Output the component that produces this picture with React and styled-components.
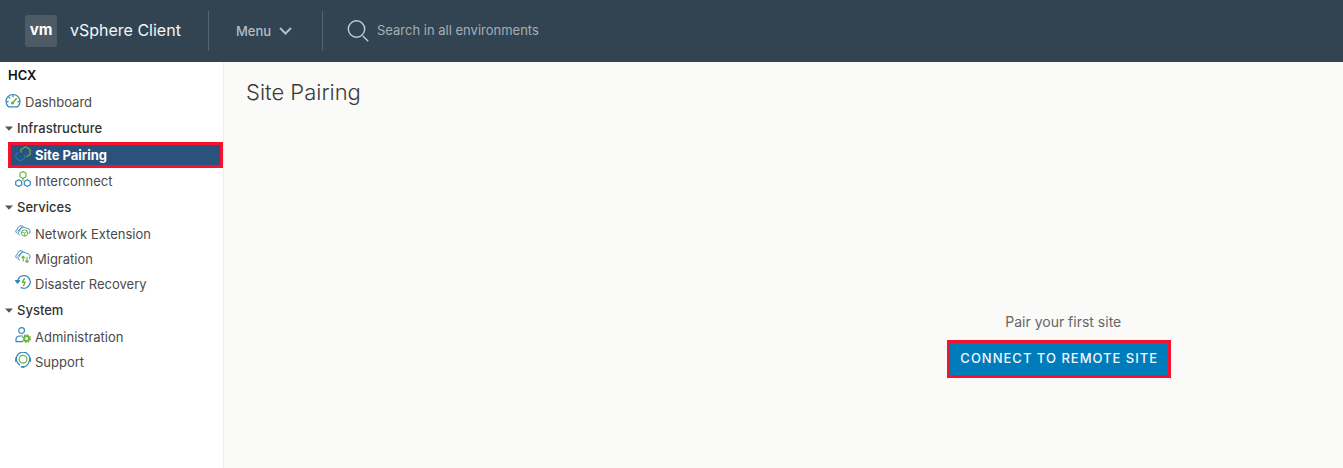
import React from "react";
import styled, { createGlobalStyle, css } from "styled-components";

const GlobalStyle = createGlobalStyle`
  *, *::before, *::after { box-sizing: border-box; }
  body {
    margin: 0;
    background: #fafaf8;
    color: #444;
    font-family: Inter, "Open Sans", "Liberation Sans", sans-serif;
    font-size: 13px;
  }
  button, input { font: inherit; }
`;

const BLUE = "#2d86bd";
const GREEN = "#6db33f";

const Page = styled.div`
  display: flex;
  flex-direction: column;
  min-height: 100vh;
`;

const Header = styled.header`
  display: flex;
  align-items: center;
  height: 62px;
  padding: 0 25px;
  background: #324452;
`;

const Logo = styled.span`
  display: grid;
  place-items: center;
  width: 32px;
  height: 32px;
  margin-right: 13px;
  border-radius: 3px;
  background: #4d5b67;
  color: #fff;
  font-size: 15px;
  font-weight: 700;
  line-height: 28px;
  padding-bottom: 2px;
`;

const Brand = styled.a`
  display: flex;
  align-items: center;
  width: 184px;
  height: 40px;
  border-right: 1px solid #56646f;
  color: #f4f6f7;
  font-size: 16px;
  text-decoration: none;
  white-space: nowrap;
`;

const BrandName = styled.span`
  padding-bottom: 2px;
`;

const MenuButton = styled.button`
  display: flex;
  align-items: center;
  gap: 8px;
  width: 114px;
  height: 40px;
  padding: 0 0 0 27px;
  border: 0;
  border-right: 1px solid #56646f;
  background: none;
  color: #b4bcc2;
  font-weight: 500;
`;

const Search = styled.label`
  display: flex;
  align-items: center;
  flex: 1;
  gap: 8px;
  padding-left: 24px;
`;

const SearchInput = styled.input`
  flex: 1;
  min-width: 0;
  padding: 0 0 2px;
  border: 0;
  outline: 0;
  background: none;
  color: #fff;
  &::placeholder { color: #a5afb7; opacity: 1; }
`;

const Body = styled.div`
  display: flex;
  flex: 1;
`;

const Sidebar = styled.nav`
  flex: 0 0 224px;
  border-right: 1px solid #eeefef;
  background: #fff;
`;

const Product = styled.h2`
  margin: 0;
  padding-left: 8px;
  color: #111;
  font-size: 13px;
  font-weight: 600;
  line-height: 26px;
`;

const List = styled.ul`
  margin: 0;
  padding: 0;
  list-style: none;
`;

const GroupTitle = styled.button`
  display: flex;
  align-items: center;
  gap: 4px;
  width: 100%;
  height: 28px;
  padding: 0 0 0 5px;
  border: 0;
  background: none;
  color: #333;
  font-weight: 500;
`;

const NavLink = styled.a`
  display: flex;
  align-items: center;
  gap: 4px;
  height: ${(p) => (p.$top ? "26px" : "25px")};
  padding-left: ${(p) => (p.$top ? "5px" : "15px")};
  padding-top: ${(p) => (p.$top ? "2px" : "0")};
  color: #4a4a4a;
  text-decoration: none;
  white-space: nowrap;
  ${(p) =>
    p.$selected &&
    css`
      height: 26px;
      margin-left: 8px;
      padding-left: 4px;
      border: 3px solid #f5122f;
      background: #29527d;
      color: #fff;
      font-weight: 700;
    `}
`;

const ItemIcon = styled.svg`
  flex: none;
  width: 16px;
  height: 16px;
  margin-bottom: 3px;
`;

const Main = styled.main`
  flex: 1;
  min-width: 0;
  padding-top: 14px;
`;

const Title = styled.h1`
  margin: 0;
  padding-left: 22px;
  color: #3a3a3a;
  font-size: 22px;
  font-weight: 300;
  line-height: 32px;
`;

const Columns = styled.div`
  display: grid;
  grid-template-columns: 1fr 1fr;
  padding-top: 204px;
`;

const EmptyState = styled.section`
  display: flex;
  flex-direction: column;
  align-items: center;
  grid-column: 2;
`;

const Hint = styled.p`
  margin: 0 0 8px;
  color: #666;
  font-size: 14px;
  line-height: 20px;
`;

const ConnectButton = styled.button`
  height: 38px;
  width: 224px;
  margin-right: 8px;
  padding: 0 0 2px;
  border: 3px solid #f5122f;
  background: #007cbb;
  color: #f2f9fd;
  font-size: 13px;
  font-weight: 500;
  letter-spacing: 1px;
  text-transform: uppercase;
  white-space: nowrap;
`;

const glyphs = {
  dashboard: (
    <>
      <path d="M3.4 13.8A7 7 0 1 1 12.6 13.8Z" />
      <path d="M8 2.2v1.6M3.8 4.2l.9.9M1.800 8.600h1.400M12.800 8.600h1.400" />
      <path d="M7.400 10.200 11.400 5.600" stroke={GREEN} strokeWidth="1.600" />
      <circle cx="7.400" cy="10" r="1" fill={GREEN} stroke={GREEN} />
    </>
  ),
  pairing: (
    <>
      <path d="M3 6.600 1 8v4L5.400 15 9.800 12.200V9" stroke="#1c78c0" />
      <path d="M6 6.200V3.400L10.600.8 15 3.400v5L11.800 10.400" stroke={GREEN} />
    </>
  ),
  interconnect: (
    <>
      <path d="M8 .6l3 1.700v3.500L8 7.500 5 5.800V2.300Z" stroke={GREEN} />
      <path d="M8 7.500v2" stroke={GREEN} />
      <path d="M3.700 8.700l3 1.700v3.300l-3 1.700-3-1.700v-3.300ZM12.300 8.700l3 1.700v3.300l-3 1.700-3-1.700v-3.300Z" />
    </>
  ),
  network: (
    <>
      <path d="M2 9.200C.2 8.200.4 6 2.400 5.400 2.600 2.600 5.200 1 7.800 2.200" strokeWidth="1" />
      <path d="M4.600 11C2.600 10.200 2.800 7.800 4.800 7 5 3.600 8.800 2 11.200 4.200 14.200 4 16 7 14.600 9.400" strokeWidth="1" />
      <path d="M2.800 7.200 6.600 3.400" strokeWidth=".8" />
      <circle cx="9.600" cy="9" r="3.200" stroke={GREEN} strokeWidth="1" />
      <path d="M7.400 8.200l2.200 1 2.200-1.600M9.600 9.200v2.600" stroke={GREEN} strokeWidth=".9" />
    </>
  ),
  migration: (
    <>
      <path d="M2 9.400C.2 8.400.4 6 2.400 5.400 2.600 2.600 5.200 1 7.800 2.200" strokeWidth="1" />
      <path d="M4.600 11.200C2.600 10.400 2.800 7.800 4.800 7 5 3.600 8.800 2 11.200 4.200 14.200 4 16 7 14.600 9.600" strokeWidth="1" />
      <path d="M2.800 7.200 6.600 3.400" strokeWidth=".8" />
      <path d="M8.200 12V7.200M6.800 8.600l1.400-1.400 1.400 1.400M12 8.400v5M10.600 12l1.400 1.400 1.400-1.400" stroke={GREEN} />
    </>
  ),
  recovery: (
    <>
      <path d="M2.600 7.800A6.300 6.300 0 1 1 6.200 13.600" />
      <path d="M.6 6.600h4L2.600 9.200Z" fill={BLUE} />
      <path d="M9.400 4.600 7.400 8.200h2.800L8.600 11.600" stroke={GREEN} strokeWidth="1.400" />
    </>
  ),
  admin: (
    <>
      <circle cx="6.600" cy="3.600" r="2.900" />
      <path d="M7.400 14.600H1V12.400C1 10 3 9 5 9h2.600" />
      <circle cx="11.600" cy="11.600" r="2.500" stroke={GREEN} strokeWidth="2" />
      <circle cx="11.600" cy="11.600" r="3.900" stroke={GREEN} strokeWidth="1.200" strokeDasharray="1.500 1.560" strokeLinecap="butt" />
    </>
  ),
  support: (
    <>
      <circle cx="8" cy="7.200" r="3.900" stroke={GREEN} />
      <path d="M2.600 10.800A6.700 6.700 0 1 1 14.400 8.800C13.600 12 12 14 8.800 15" />
      <path d="M.8 6.200v3.200M15.300 6.200v3.200M2.600 10.800 4.600 13" />
      <path d="M6.600 14.800h2" strokeWidth="1.800" />
    </>
  ),
};

const groups = [
  {
    title: "Infrastructure",
    items: [
      { label: "Site Pairing", icon: "pairing", selected: true },
      { label: "Interconnect", icon: "interconnect" },
    ],
  },
  {
    title: "Services",
    items: [
      { label: "Network Extension", icon: "network" },
      { label: "Migration", icon: "migration" },
      { label: "Disaster Recovery", icon: "recovery" },
    ],
  },
  {
    title: "System",
    items: [
      { label: "Administration", icon: "admin" },
      { label: "Support", icon: "support" },
    ],
  },
];

function NavItem({ label, icon, selected, top }) {
  return (
    <NavLink href="#" $selected={selected} $top={top} aria-current={selected ? "page" : undefined}>
      <ItemIcon
        viewBox="0 0 16 16"
        fill="none"
        stroke={BLUE}
        strokeWidth="1.2"
        strokeLinecap="round"
        strokeLinejoin="round"
        aria-hidden="true"
      >
        {glyphs[icon]}
      </ItemIcon>
      {label}
    </NavLink>
  );
}

export default function App() {
  return (
    <Page>
      <GlobalStyle />
      <Header>
        <Brand href="#">
          <Logo>vm</Logo>
          <BrandName>vSphere Client</BrandName>
        </Brand>
        <MenuButton type="button">
          Menu
          <svg width="13" height="8" viewBox="0 0 13 8" fill="none" stroke="currentColor" strokeWidth="2" aria-hidden="true">
            <path d="M1 1l5.500 5.500L12 1" />
          </svg>
        </MenuButton>
        <Search>
          <svg width="22" height="22" viewBox="0 0 22 22" fill="none" stroke="#c3cad0" strokeWidth="1.400" aria-hidden="true">
            <circle cx="9.500" cy="9" r="8.200" />
            <path d="M15.800 16l5.400 5.200" />
          </svg>
          <SearchInput type="text" aria-label="Search" placeholder="Search in all environments" />
        </Search>
      </Header>
      <Body>
        <Sidebar>
          <Product>HCX</Product>
          <NavItem label="Dashboard" icon="dashboard" top />
          {groups.map((group) => (
            <section key={group.title}>
              <GroupTitle type="button" aria-expanded="true">
                <svg width="8" height="5" viewBox="0 0 8 5" aria-hidden="true">
                  <path d="M0 .5h8L4 4.800Z" fill="#555" />
                </svg>
                {group.title}
              </GroupTitle>
              <List>
                {group.items.map((item) => (
                  <li key={item.label}>
                    <NavItem {...item} />
                  </li>
                ))}
              </List>
            </section>
          ))}
        </Sidebar>
        <Main>
          <Title>Site Pairing</Title>
          <Columns>
            <EmptyState>
              <Hint>Pair your first site</Hint>
              <ConnectButton type="button">Connect to remote site</ConnectButton>
            </EmptyState>
          </Columns>
        </Main>
      </Body>
    </Page>
  );
}
